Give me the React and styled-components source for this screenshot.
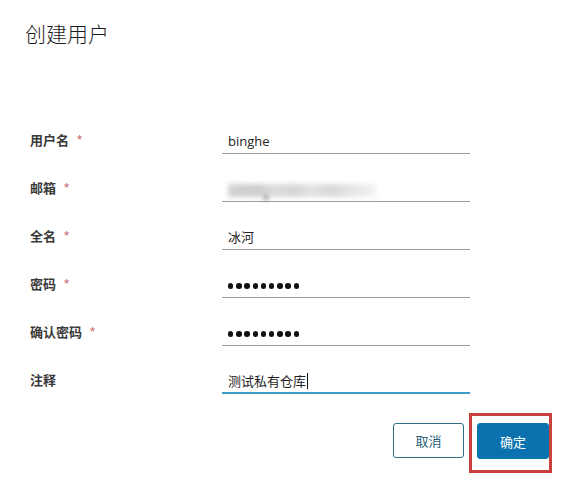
import React from "react";
import styled, { createGlobalStyle } from "styled-components";

const Global = createGlobalStyle`
  html, body { margin: 0; padding: 0; background: #fff; }
  body { font-family: "Noto Sans", "Noto Sans CJK SC", sans-serif; color: #222; }
`;

const Page = styled.div`
  width: 572px;
  height: 481px;
  padding-top: 19px;
  box-sizing: border-box;
  overflow: hidden;
`;

const Title = styled.h1`
  margin: 0 0 0 25px;
  font-family: "Noto Sans CJK SC", sans-serif;
  font-size: 21px;
  line-height: 28px;
  font-weight: 300;
  color: #1b1b1b;
`;

const Form = styled.div`
  margin-top: 82px;
  padding-left: 30px;
`;

const Row = styled.div`
  display: grid;
  grid-template-columns: 192px 248px;
  height: 48px;
  align-items: start;
`;

const Label = styled.div`
  font-family: "Noto Sans CJK SC", sans-serif;
  font-size: 13px;
  line-height: 22px;
  font-weight: 700;
  color: #3a3a3a;
  display: flex;
  align-items: center;
`;

const Star = styled.span`
  color: #c0606a;
  font-family: "Liberation Sans", sans-serif;
  font-weight: 400;
  font-size: 13px;
  margin-left: 8px;
`;

const Field = styled.div`
  height: ${(p) => (p.$focus ? 23 : 24)}px;
  border-bottom: ${(p) => (p.$focus ? "2px solid #3b9ccc" : "1px solid #9c9c9c")};
  padding-left: 6px;
  display: flex;
  align-items: center;
  font-family: "Open Sans", "Noto Sans CJK SC", sans-serif;
  font-size: 13px;
  line-height: 24px;
  color: #1e1e1e;
  position: relative;
`;

const Blur = styled.div`
  width: 148px;
  height: 13px;
  margin-top: 3px;
  background: linear-gradient(
    90deg,
    #d2d2d2 0%,
    #cdcdcd 20%,
    #dcdcdc 30%,
    #d4d4d4 45%,
    #e2e2e2 55%,
    #d8d8d8 70%,
    #e6e6e6 85%,
    #f3f3f3 100%
  );
  filter: blur(2.5px);
  position: relative;
`;

const BlurSpot = styled.span`
  position: absolute;
  left: 36px;
  bottom: -3px;
  width: 4px;
  height: 4px;
  border-radius: 50%;
  background: #555;
`;

const Dots = styled.div`
  display: flex;
  gap: 2.8px;
  margin-top: 2px;
`;

const Dot = styled.span`
  width: 5.4px;
  height: 5.4px;
  border-radius: 50%;
  background: #111;
`;

const Caret = styled.span`
  display: inline-block;
  width: 1px;
  height: 16px;
  background: #111;
  margin-left: 1px;
`;

const Actions = styled.div`
  margin-top: 6px;
  display: flex;
  justify-content: flex-end;
  gap: 13px;
  padding-right: 23px;
`;

const Button = styled.button`
  width: ${(p) => (p.$primary ? 72 : 71)}px;
  height: ${(p) => (p.$primary ? 36 : 35)}px;
  box-sizing: border-box;
  border-radius: 3px;
  border: 1px solid ${(p) => (p.$primary ? "#0b72b0" : "#2e6f87")};
  background: ${(p) => (p.$primary ? "#0b72b0" : "#fff")};
  color: ${(p) => (p.$primary ? "#fff" : "#2a6279")};
  font-family: "Noto Sans CJK SC", sans-serif;
  font-size: 13px;
  padding: 0;
  cursor: pointer;
`;

const Highlight = styled.div`
  position: relative;
`;

const HighlightBox = styled.div`
  position: absolute;
  left: -8px;
  top: -10px;
  right: -3px;
  bottom: -14px;
  border: 3px solid #c9413f;
  pointer-events: none;
`;

const Required = () => <Star>*</Star>;

export default function App() {
  const dots = Array.from({ length: 9 }, (_, i) => <Dot key={i} />);
  return (
    <>
      <Global />
      <Page>
        <Title>创建用户</Title>
        <Form>
          <Row>
            <Label>
              用户名<Required />
            </Label>
            <Field>binghe</Field>
          </Row>
          <Row>
            <Label>
              邮箱<Required />
            </Label>
            <Field>
              <Blur>
                <BlurSpot />
              </Blur>
            </Field>
          </Row>
          <Row>
            <Label>
              全名<Required />
            </Label>
            <Field>冰河</Field>
          </Row>
          <Row>
            <Label>
              密码<Required />
            </Label>
            <Field>
              <Dots>{dots}</Dots>
            </Field>
          </Row>
          <Row>
            <Label>
              确认密码<Required />
            </Label>
            <Field>
              <Dots>{dots}</Dots>
            </Field>
          </Row>
          <Row>
            <Label>注释</Label>
            <Field $focus>
              测试私有仓库
              <Caret />
            </Field>
          </Row>
        </Form>
        <Actions>
          <Button>取消</Button>
          <Highlight>
            <Button $primary>确定</Button>
            <HighlightBox />
          </Highlight>
        </Actions>
      </Page>
    </>
  );
}
